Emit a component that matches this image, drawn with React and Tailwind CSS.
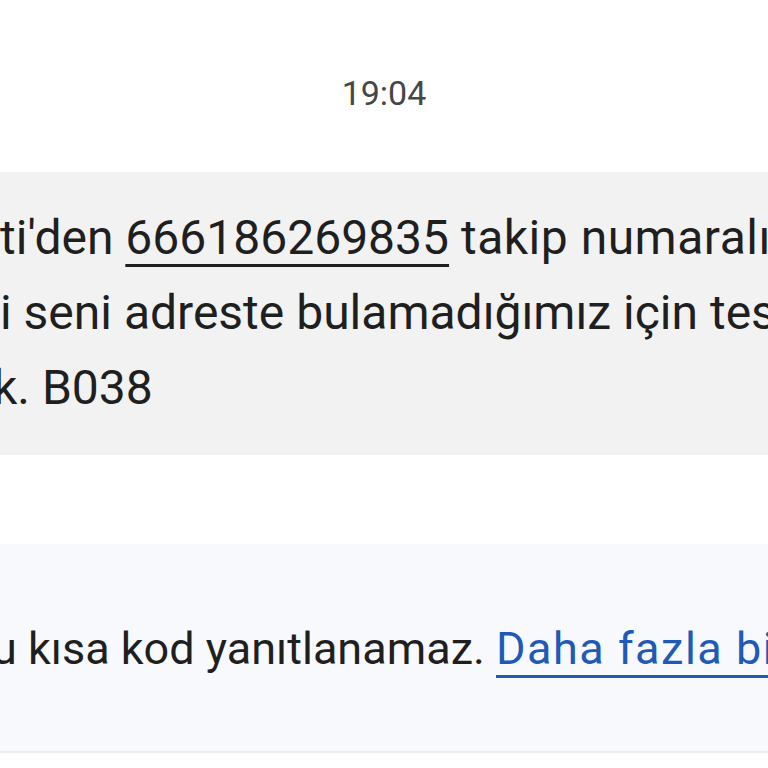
export default function App() {
  return (
    <div
      className="w-[768px] h-[768px] bg-white overflow-hidden"
      style={{ fontFamily: "Roboto, 'Noto Sans', sans-serif" }}
    >
      {/* Timestamp */}
      <div className="pt-[73px] text-center text-[34px] leading-[40px] text-[#444746]">
        19:04
      </div>

      {/* Incoming message bubble */}
      <div className="mt-[59px] h-[283px] bg-[#f2f2f2] pt-[28px] text-[48px] leading-[75px] text-[#1f1f1f] whitespace-nowrap">
        <div>
          ti'den{" "}
          <span className="underline decoration-[3px] underline-offset-[10px]">666186269835</span>{" "}
          <span className="tracking-[0.5px]">takip numaralı</span>
        </div>
        <div>i seni adreste bulamadığımız için teslim</div>
        <div className="-ml-[7px]">k. B038</div>
      </div>

      {/* Short code notice */}
      <div className="mt-[89px] h-[209px] bg-[#f8f9fc] border-b-2 border-[#eceeee] pt-[77px] text-[45px] leading-[56px] text-[#1f1f1f] whitespace-nowrap">
        <div className="-ml-[8px]">
          u kısa kod yanıtlanamaz.{" "}
          <span className="text-[#1f5ab6] tracking-[1.5px] underline decoration-[3px] underline-offset-[11px]">
            Daha fazla bilgi
          </span>
        </div>
      </div>
    </div>
  );
}
